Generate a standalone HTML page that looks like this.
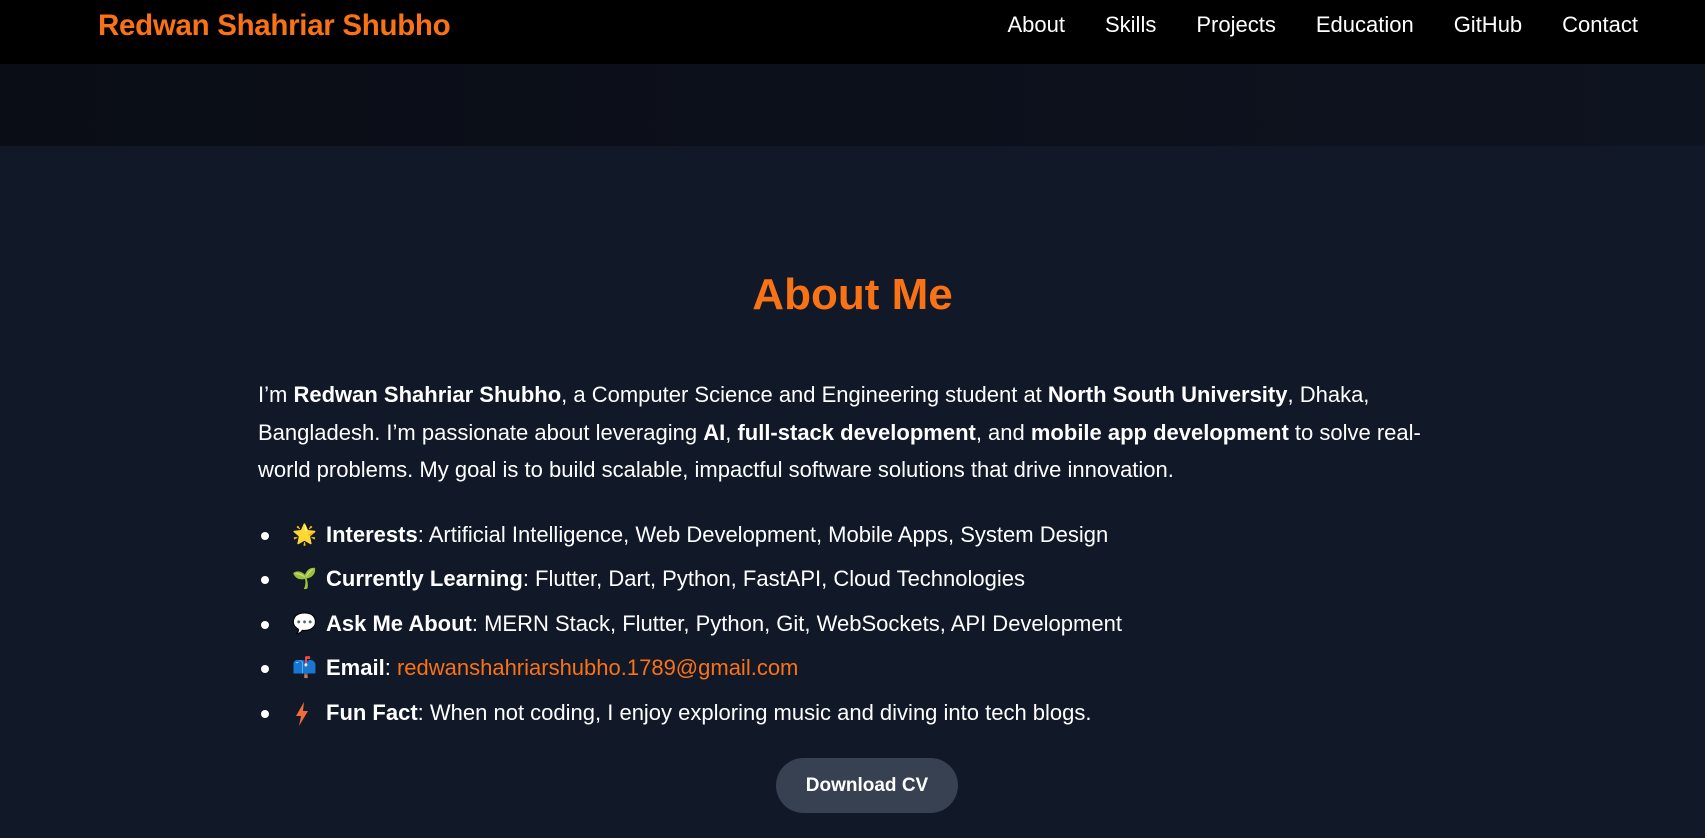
<!DOCTYPE html>
<html><head><meta charset="utf-8"><style>
*{margin:0;padding:0;box-sizing:border-box}
body{width:1705px;height:838px;overflow:hidden;background:#111827;font-family:"Liberation Sans","DejaVu Sans",sans-serif;color:#fff}
nav{height:64px;background:#000;position:relative}
.logo{position:absolute;left:98px;top:9px;font-size:29.5px;font-weight:bold;color:#f97316;letter-spacing:-0.3px}
.links{position:absolute;right:67px;top:12px;display:flex;gap:40px;font-size:22px}
.band{height:82px;background:linear-gradient(90deg,#0a0d15,#0e1320)}
h2{text-align:center;color:#f97316;font-size:44px;margin-top:124px;font-weight:bold}
.wrap{width:1192px;margin:0 auto 0 258px}
p{font-size:22px;line-height:37.5px;margin-top:56px}
ul{list-style:none;margin-top:24px;font-size:22px}
li{height:44.5px;line-height:44.5px;position:relative;padding-left:68px}
li:before{content:"";position:absolute;left:3px;top:19px;width:8px;height:8px;border-radius:50%;background:#fff}
.e{position:absolute;left:34px;font-size:20px}
a{color:#f97316;text-decoration:none}
.btn{position:absolute;left:776px;top:758px;width:182px;height:55px;border-radius:28px;background:#374151;font-weight:bold;font-size:19px;text-align:center;line-height:55px}
</style></head><body>
<nav><div class="logo">Redwan Shahriar Shubho</div>
<div class="links"><span>About</span><span>Skills</span><span>Projects</span><span>Education</span><span>GitHub</span><span>Contact</span></div></nav>
<div class="band"></div>
<h2>About Me</h2>
<div class="wrap">
<p>I’m <b>Redwan Shahriar Shubho</b>, a Computer Science and Engineering student at <b>North South University</b>, Dhaka, Bangladesh. I’m passionate about leveraging <b>AI</b>, <b>full-stack development</b>, and <b>mobile app development</b> to solve real-world problems. My goal is to build scalable, impactful software solutions that drive innovation.</p>
<ul>
<li><span class="e">🌟</span><b>Interests</b>: Artificial Intelligence, Web Development, Mobile Apps, System Design</li>
<li><span class="e">🌱</span><b>Currently Learning</b>: Flutter, Dart, Python, FastAPI, Cloud Technologies</li>
<li><span class="e">💬</span><b>Ask Me About</b>: MERN Stack, Flutter, Python, Git, WebSockets, API Development</li>
<li><span class="e">📫</span><b>Email</b>: <a>redwanshahriarshubho.1789@gmail.com</a></li>
<li><svg class="e" style="top:11px;left:37px" width="14" height="24" viewBox="0 0 14 24"><path d="M9 0L1 14h5l-2 10 9-15H8z" fill="#f26b3a"/></svg><b>Fun Fact</b>: When not coding, I enjoy exploring music and diving into tech blogs.</li>
</ul></div>
<div class="btn">Download CV</div>
</body></html>
